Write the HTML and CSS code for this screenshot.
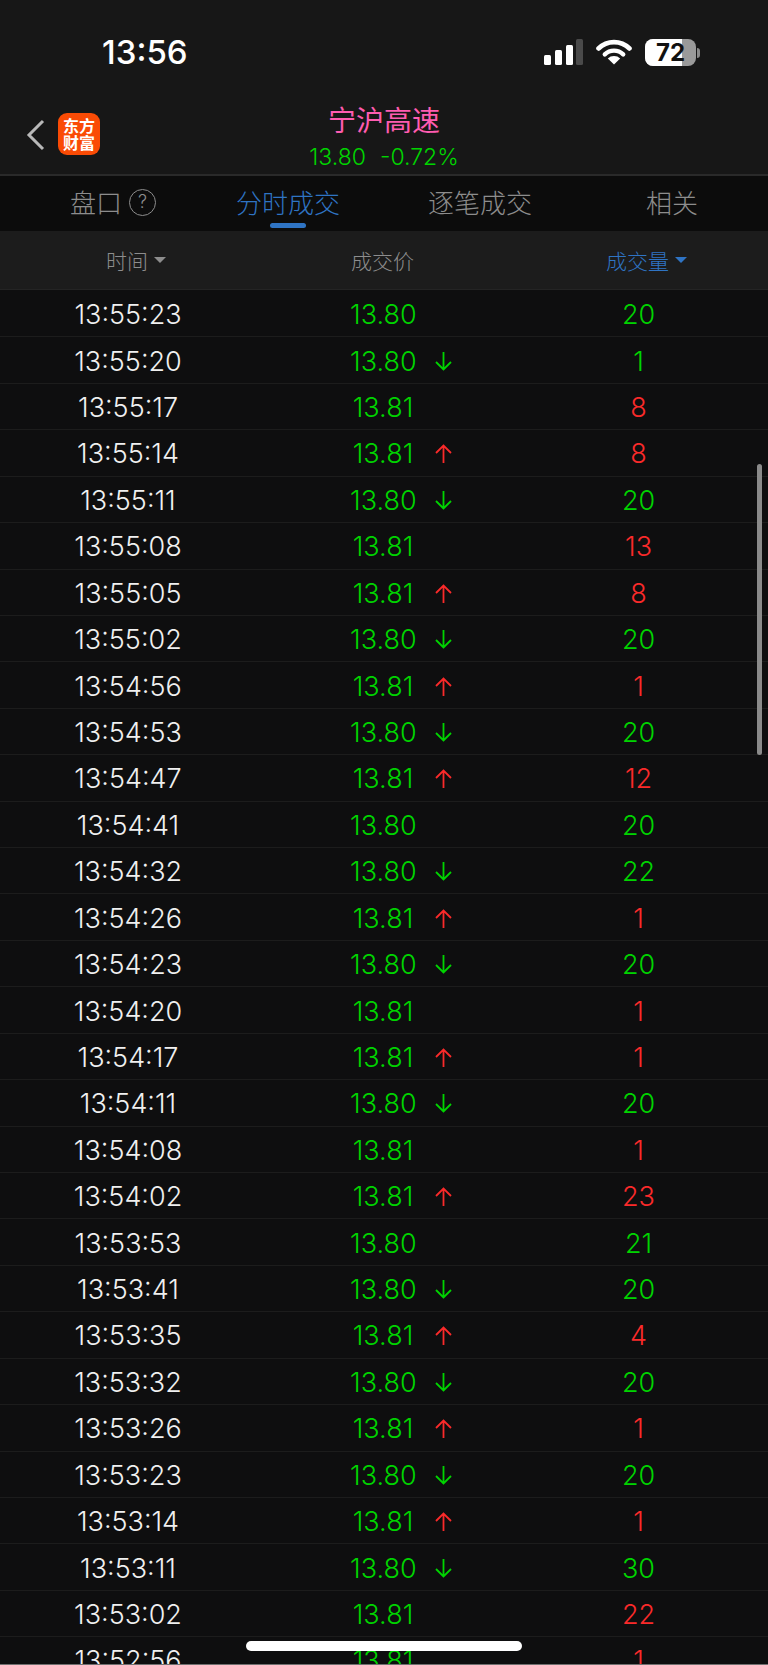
FILE: index.html
```html
<!DOCTYPE html>
<html lang="zh-CN">
<head>
    <meta charset="UTF-8">
    <meta name="viewport" content="width=device-width, initial-scale=1.0">
    <title>宁沪高速</title>
    <link rel="stylesheet" href="styles.css">
</head>
<body>
<div class="screen">

<div class="status-bar">
    <span class="clock">13:56</span>
    <div class="status-icons">
        <svg class="signal" width="39" height="26" viewBox="0 0 39 26">
            <rect x="0" y="16" width="7" height="10" rx="1.5" fill="#fff"/>
            <rect x="11" y="11" width="7" height="15" rx="1.5" fill="#fff"/>
            <rect x="22" y="6" width="7" height="20" rx="1.5" fill="#fff"/>
            <rect x="32" y="0" width="7" height="26" rx="1.5" fill="#4a4a4a"/>
        </svg>
        <svg class="wifi" width="36" height="26" viewBox="0 0 36 26">
            <path d="M2.5 9.5 A22 22 0 0 1 33.5 9.5" fill="none" stroke="#fff" stroke-width="4.6" stroke-linecap="round"/>
            <path d="M8.8 15.4 A13.2 13.2 0 0 1 27.2 15.4" fill="none" stroke="#fff" stroke-width="4.4" stroke-linecap="round"/>
            <path d="M18 25.5 L11.8 19.6 A9 9 0 0 1 24.2 19.6 Z" fill="#fff"/>
        </svg>
        <div class="battery">
            <div class="battery-body">
                <div class="battery-fill"></div>
                <span class="battery-text">72</span>
            </div>
            <div class="battery-cap"></div>
        </div>
    </div>
</div>

<div class="title-bar">
    <svg class="back" width="20" height="32" viewBox="0 0 20 32">
        <path d="M17 2 L3 16 L17 30" fill="none" stroke="#b9b9b9" stroke-width="3"/>
    </svg>
    <div class="logo"><span>东方</span><span>财富</span></div>
    <div class="title-center">
        <div class="stock-name">宁沪高速</div>
        <div class="stock-price"><span>13.80</span><span>-0.72%</span></div>
    </div>
</div>

<div class="tabs">
    <div class="tab">盘口<span class="help">?</span></div>
    <div class="tab active">分时成交</div>
    <div class="tab">逐笔成交</div>
    <div class="tab">相关</div>
</div>

<div class="table-head">
    <div class="head-cell head-time">时间<i class="caret"></i></div>
    <div class="head-cell head-price">成交价</div>
    <div class="head-cell head-volume active">成交量<i class="caret"></i></div>
</div>

<div class="rows" id="rows"></div>

<div class="scrollbar"></div>
<div class="home-bar"></div>

</div>
<script>
    // time, price, arrow (u / d / blank), volume, volume colour
    let trades = [
        ["13:55:23", "13.80", "",  "20", "g"],
        ["13:55:20", "13.80", "d", "1",  "g"],
        ["13:55:17", "13.81", "",  "8",  "r"],
        ["13:55:14", "13.81", "u", "8",  "r"],
        ["13:55:11", "13.80", "d", "20", "g"],
        ["13:55:08", "13.81", "",  "13", "r"],
        ["13:55:05", "13.81", "u", "8",  "r"],
        ["13:55:02", "13.80", "d", "20", "g"],
        ["13:54:56", "13.81", "u", "1",  "r"],
        ["13:54:53", "13.80", "d", "20", "g"],
        ["13:54:47", "13.81", "u", "12", "r"],
        ["13:54:41", "13.80", "",  "20", "g"],
        ["13:54:32", "13.80", "d", "22", "g"],
        ["13:54:26", "13.81", "u", "1",  "r"],
        ["13:54:23", "13.80", "d", "20", "g"],
        ["13:54:20", "13.81", "",  "1",  "r"],
        ["13:54:17", "13.81", "u", "1",  "r"],
        ["13:54:11", "13.80", "d", "20", "g"],
        ["13:54:08", "13.81", "",  "1",  "r"],
        ["13:54:02", "13.81", "u", "23", "r"],
        ["13:53:53", "13.80", "",  "21", "g"],
        ["13:53:41", "13.80", "d", "20", "g"],
        ["13:53:35", "13.81", "u", "4",  "r"],
        ["13:53:32", "13.80", "d", "20", "g"],
        ["13:53:26", "13.81", "u", "1",  "r"],
        ["13:53:23", "13.80", "d", "20", "g"],
        ["13:53:14", "13.81", "u", "1",  "r"],
        ["13:53:11", "13.80", "d", "30", "g"],
        ["13:53:02", "13.81", "",  "22", "r"],
        ["13:52:56", "13.81", "",  "1",  "r"]
    ];

    let arrows = {
        u: '<svg width="17" height="19" viewBox="0 0 17 19"><path d="M8.5 19 V1.5 M1 9 L8.5 1.5 L16 9" fill="none" stroke="#fa2a2a" stroke-width="1.8"/></svg>',
        d: '<svg width="17" height="19" viewBox="0 0 17 19"><path d="M8.5 0 V17.5 M1 10 L8.5 17.5 L16 10" fill="none" stroke="#00d400" stroke-width="1.8"/></svg>',
        "": ""
    };

    document.getElementById("rows").innerHTML = trades.map((t) => `
        <div class="row">
            <div class="time">${t[0]}</div>
            <div class="price"><span class="price-num">${t[1]}</span><span class="arrow">${arrows[t[2]]}</span></div>
            <div class="volume ${t[4]}">${t[3]}</div>
        </div>`).join("");
</script>
</body>
</html>
```

FILE: styles.css
```css
* {
    box-sizing: border-box;
}
html, body {
    margin: 0;
    padding: 0;
    background-color: #0e0e0f;
}
body {
    font-family: Inter, "Noto Sans CJK SC", sans-serif;
    color: #fff;
}
.screen {
    position: relative;
    width: 768px;
    height: 1665px;
    overflow: hidden;
    border-bottom: 1px solid #707070;
}

/* status bar */
.status-bar {
    height: 105px;
    background-color: #171717;
    display: flex;
    justify-content: space-between;
    padding: 34px 68px 0 102px;
}
.clock {
    font-size: 33px;
    font-weight: 500;
    line-height: 36px;
}
.status-icons {
    display: flex;
    align-items: flex-start;
    gap: 13px;
    padding-top: 5px;
}
.battery {
    display: flex;
    align-items: center;
    gap: 1px;
}
.battery-body {
    position: relative;
    width: 51px;
    height: 27px;
    border-radius: 8px;
    background-color: #9a9a9a;
    overflow: hidden;
}
.battery-fill {
    width: 37px;
    height: 27px;
    background-color: #fff;
}
.battery-text {
    position: absolute;
    left: 0;
    top: 0;
    width: 51px;
    text-align: center;
    font-size: 24px;
    font-weight: 700;
    line-height: 27px;
    color: #111;
}
.battery-cap {
    width: 3px;
    height: 10px;
    border-radius: 0 3px 3px 0;
    background-color: #8a8a8a;
}

/* title */
.title-bar {
    position: relative;
    height: 71px;
    background-color: #171717;
    border-bottom: 2px solid #2a2a2a;
    display: flex;
    align-items: flex-start;
    padding: 8px 0 0 26px;
}
.back {
    margin-top: 6px;
}
.logo {
    width: 42px;
    height: 42px;
    margin-left: 12px;
    border-radius: 9px;
    background-color: #fa4b05;
    color: #fff;
    font-size: 16px;
    font-weight: 700;
    line-height: 17px;
    display: flex;
    flex-direction: column;
    align-items: center;
    justify-content: center;
    font-family: "Noto Sans CJK SC", sans-serif;
}
.title-center {
    position: absolute;
    left: 0;
    right: 0;
    top: 0;
    text-align: center;
}
.stock-name {
    color: #ff5cb0;
    font-size: 28px;
    line-height: 32px;
    margin-top: -2px;
    font-family: "Noto Sans CJK SC", sans-serif;
    font-weight: 400;
}
.stock-price {
    color: #00d400;
    font-size: 23px;
    font-weight: 350;
    line-height: 28px;
    margin-top: 8px;
    display: flex;
    justify-content: center;
    gap: 14px;
}

/* tabs */
.tabs {
    height: 55px;
    background-color: #0c0c0c;
    display: grid;
    grid-template-columns: repeat(4, 192px);
}
.tab {
    color: #8d8d8d;
    font-size: 26px;
    font-weight: 300;
    line-height: 52px;
    position: relative;
    font-family: "Noto Sans CJK SC", sans-serif;
    text-align: center;
}
.tab.active {
    color: #2f74c4;
}
.tab.active::after {
    content: "";
    position: absolute;
    left: 50%;
    bottom: 3px;
    width: 36px;
    height: 5px;
    margin-left: -18px;
    border-radius: 3px;
    background-color: #2f74c4;
}
.help {
    position: absolute;
    left: 129px;
    top: 13px;
    width: 27px;
    height: 27px;
    border: 1.5px solid #8d8d8d;
    border-radius: 50%;
    font-size: 18px;
    line-height: 24px;
    text-align: center;
    font-family: Inter, sans-serif;
}

/* table */
.table-head {
    height: 59px;
    background-color: #1c1c1c;
    border-bottom: 1px solid #242424;
    display: grid;
    grid-template-columns: repeat(3, 256px);
}
.head-cell {
    color: #8d8d8d;
    font-size: 21px;
    font-weight: 300;
    font-family: "Noto Sans CJK SC", sans-serif;
    display: flex;
    align-items: center;
    justify-content: center;
}
.head-time {
    padding-left: 16px;
}
.head-price {
    padding-right: 3px;
}
.head-volume {
    padding-left: 13px;
}
.head-cell.active {
    color: #2f74c4;
}
.caret {
    width: 0;
    height: 0;
    margin-left: 6px;
    border-left: 6px solid transparent;
    border-right: 6px solid transparent;
    border-top: 6px solid #8d8d8d;
}
.head-cell.active .caret {
    border-top-color: #2f74c4;
}
.rows {
    padding-top: 1px;
}
.row {
    height: 46.43px;
    border-bottom: 1px solid #1c1c1c;
    display: grid;
    grid-template-columns: repeat(3, 256px);
    align-items: center;
    font-size: 27px;
    font-weight: 350;
    text-align: center;
    padding-top: 2px;
}
.time {
    color: #f0f0f0;
}
.price {
    display: grid;
    grid-template-columns: 1fr 66px 1fr;
    align-items: center;
    color: #00d400;
    padding-right: 2px;
}
.price-num {
    grid-column: 2;
}
.arrow {
    grid-column: 3;
    display: flex;
    padding-left: 19px;
}
.volume {
    padding-right: 3px;
}
.volume.g {
    color: #00d400;
}
.volume.r {
    color: #fa2a2a;
}

/* things lying over the list */
.scrollbar {
    position: absolute;
    left: 757px;
    top: 464px;
    width: 5px;
    height: 291px;
    border-radius: 3px;
    background-color: #8a8a8a;
}
.home-bar {
    position: absolute;
    left: 246px;
    top: 1641px;
    width: 276px;
    height: 10px;
    border-radius: 5px;
    background-color: #fff;
}
```
